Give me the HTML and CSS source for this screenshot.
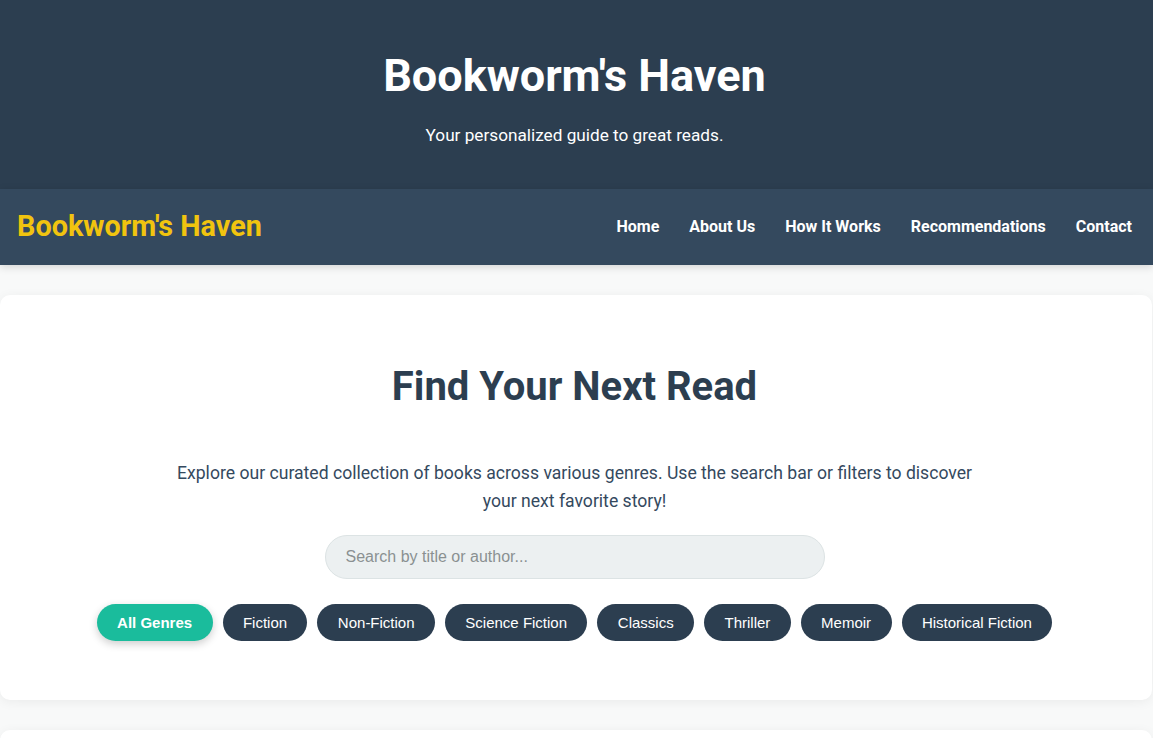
FILE: index.html
```html
<!DOCTYPE html>
<html lang="en">
<head>
<meta charset="utf-8">
<title>Bookworm's Haven</title>
<link rel="stylesheet" href="styles.css">
</head>
<body>
<header class="hero">
  <h1 class="hero-title">Bookworm's Haven</h1>
  <p class="hero-sub">Your personalized guide to great reads.</p>
</header>
<nav class="navbar">
  <div class="logo">Bookworm's Haven</div>
  <ul class="nav-links">
    <li><a href="#">Home</a></li>
    <li><a href="#">About Us</a></li>
    <li><a href="#">How It Works</a></li>
    <li><a href="#">Recommendations</a></li>
    <li><a href="#">Contact</a></li>
  </ul>
</nav>
<main class="main">
  <section class="card">
    <h2 class="card-title">Find Your Next Read</h2>
    <p class="card-text">Explore our curated collection of books across various genres. Use the search bar or filters to discover your next favorite story!</p>
    <input class="search" type="text" placeholder="Search by title or author...">
    <div class="filters">
      <button class="pill active">All Genres</button>
      <button class="pill">Fiction</button>
      <button class="pill">Non-Fiction</button>
      <button class="pill">Science Fiction</button>
      <button class="pill">Classics</button>
      <button class="pill">Thriller</button>
      <button class="pill">Memoir</button>
      <button class="pill">Historical Fiction</button>
    </div>
  </section>
  <section class="card next"></section>
</main>
</body>
</html>
```
FILE: styles.css
```css
* { box-sizing: border-box; }
body {
  margin: 0;
  font-family: Roboto, "Liberation Sans", sans-serif;
  background: #f8f9f9;
  color: #2c3e50;
}
.hero {
  background: #2c3e50;
  color: #fff;
  text-align: center;
  padding: 48px 24px 43px 20px;
}
.hero-title {
  margin: 0;
  font-size: 45px;
  font-weight: 700;
  line-height: 56px;
}
.hero-sub {
  margin: 20px 0 0;
  font-size: 17.2px;
  line-height: 22px;
}
.navbar {
  background: #34495e;
  height: 76px;
  display: flex;
  align-items: center;
  justify-content: space-between;
  padding: 0 21px 2px 17px;
  box-shadow: 0 2px 8px rgba(0,0,0,0.15);
  position: relative;
}
.logo {
  color: #f1c40f;
  font-size: 28.8px;
  font-weight: 700;
}
.nav-links {
  list-style: none;
  display: flex;
  gap: 30px;
  margin: 0;
  padding: 0;
}
.nav-links a {
  color: #fff;
  text-decoration: none;
  font-weight: 700;
  font-size: 16px;
}
.main {
  padding: 30px 0;
  display: flex;
  flex-direction: column;
  gap: 30px;
}
.card {
  background: #fff;
  border-radius: 10px;
  box-shadow: 0 2px 12px rgba(0,0,0,0.06);
  padding: 40px 23px 40px 20px;
  text-align: center;
  width: 1152px;
}
.card-title {
  margin: 30px 0 50px;
  font-size: 40px;
  line-height: 44px;
  font-weight: 700;
  color: #2c3e50;
}
.card-text {
  max-width: 820px;
  margin: 0 auto 20px;
  font-size: 17.6px;
  line-height: 28px;
  color: #34495e;
}
.search {
  display: block;
  width: 500px;
  height: 44px;
  margin: 0 auto 25px;
  border: 1px solid #dce3e4;
  border-radius: 22px;
  background: #ecf0f1;
  padding: 0 20px;
  font-family: "Liberation Sans", Arial, sans-serif;
  font-size: 16px;
  color: #2c3e50;
  outline: none;
}
.search::placeholder { color: #8a9091; }
.filters {
  display: flex;
  justify-content: center;
  flex-wrap: wrap;
  gap: 10px;
  margin-bottom: 19px;
}
.pill {
  height: 37px;
  padding: 0 20.4px;
  border: none;
  border-radius: 19px;
  background: #2c3e50;
  color: #fff;
  font-family: "Liberation Sans", Arial, sans-serif;
  font-size: 15px;
  cursor: pointer;
}
.pill.active {
  background: #1abc9c;
  font-weight: 700;
  box-shadow: 0 3px 8px rgba(0,0,0,0.2);
}
.card.next {
  height: 40px;
  padding: 0;
}
```
